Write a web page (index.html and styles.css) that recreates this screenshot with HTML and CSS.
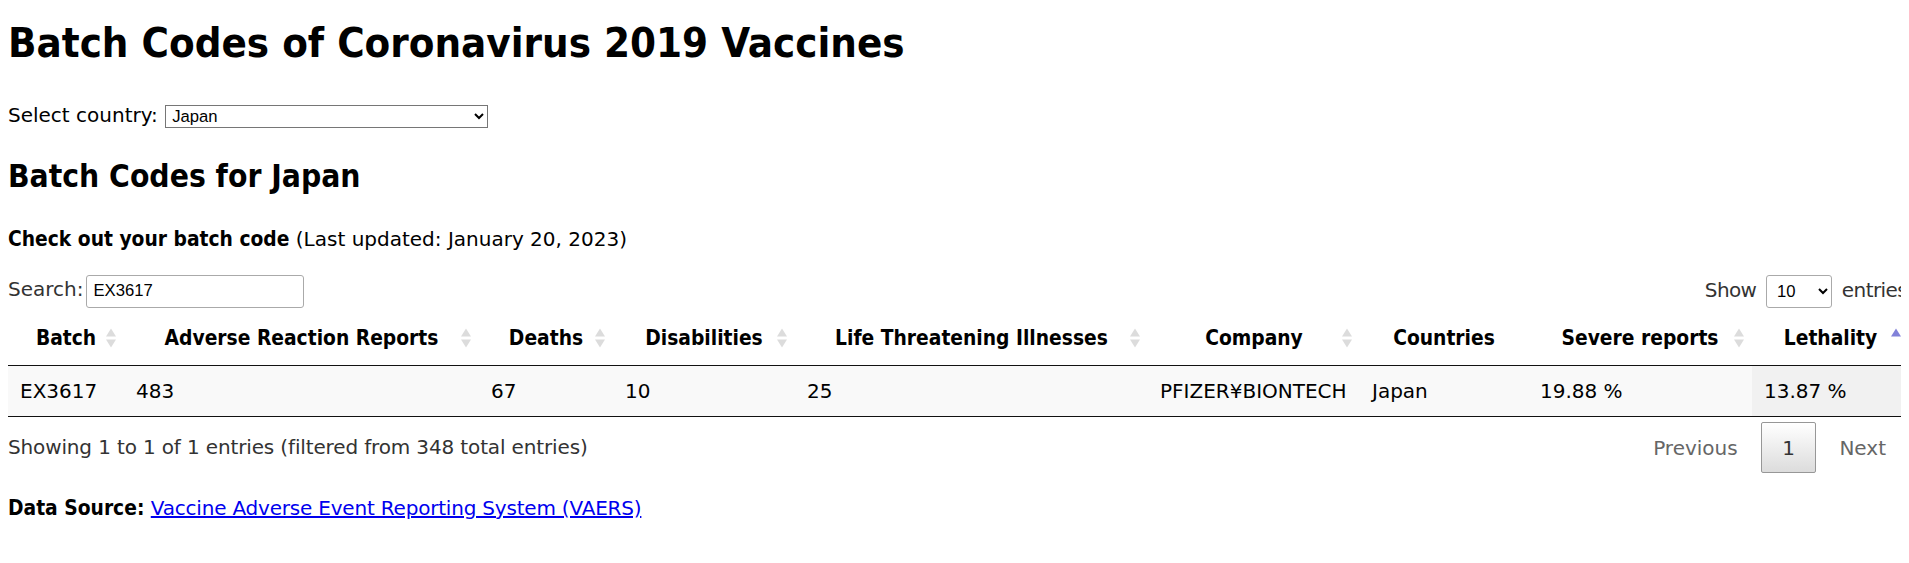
FILE: index.html
```html
<!DOCTYPE html>
<html lang="en">
<head>
<meta charset="utf-8">
<title>Batch Codes of Coronavirus 2019 Vaccines</title>
<link rel="stylesheet" href="styles.css">
</head>
<body>
<h1 class="title">Batch Codes of Coronavirus 2019 Vaccines</h1>
<div class="country-row">
  <label class="country-label">Select country: <select class="country-select"><option>Japan</option></select></label>
</div>
<h2 class="subtitle">Batch Codes for Japan</h2>
<p class="lead"><b class="strong">Check out your batch code</b> (Last updated: January 20, 2023)</p>

<div class="dt-wrapper">
  <div class="dt-top">
    <div class="dt-filter"><label class="dt-label">Search:<input class="dt-search" type="search" value="EX3617"></label></div>
    <div class="dt-length"><label class="dt-label dt-length-label">Show <select class="dt-length-select"><option>10</option><option>25</option><option>50</option><option>100</option></select> entries</label></div>
  </div>

  <table class="dt-table">
    <colgroup>
      <col class="c-batch">
      <col class="c-adverse">
      <col class="c-deaths">
      <col class="c-disab">
      <col class="c-life">
      <col class="c-company">
      <col class="c-countries">
      <col class="c-severe">
      <col class="c-lethal">
    </colgroup>
    <thead>
      <tr>
        <th class="sortable">Batch<svg class="sort-icon" width="10" height="20" viewBox="0 0 10 20"><path d="M0 8.5 L5 0.5 L10 8.5Z" fill="#dcdcdc"/><path d="M0 11.5 L5 19.5 L10 11.5Z" fill="#dcdcdc"/></svg></th>
        <th class="sortable">Adverse Reaction Reports<svg class="sort-icon" width="10" height="20" viewBox="0 0 10 20"><path d="M0 8.5 L5 0.5 L10 8.5Z" fill="#dcdcdc"/><path d="M0 11.5 L5 19.5 L10 11.5Z" fill="#dcdcdc"/></svg></th>
        <th class="sortable">Deaths<svg class="sort-icon" width="10" height="20" viewBox="0 0 10 20"><path d="M0 8.5 L5 0.5 L10 8.5Z" fill="#dcdcdc"/><path d="M0 11.5 L5 19.5 L10 11.5Z" fill="#dcdcdc"/></svg></th>
        <th class="sortable">Disabilities<svg class="sort-icon" width="10" height="20" viewBox="0 0 10 20"><path d="M0 8.5 L5 0.5 L10 8.5Z" fill="#dcdcdc"/><path d="M0 11.5 L5 19.5 L10 11.5Z" fill="#dcdcdc"/></svg></th>
        <th class="sortable">Life Threatening Illnesses<svg class="sort-icon" width="10" height="20" viewBox="0 0 10 20"><path d="M0 8.5 L5 0.5 L10 8.5Z" fill="#dcdcdc"/><path d="M0 11.5 L5 19.5 L10 11.5Z" fill="#dcdcdc"/></svg></th>
        <th class="sortable">Company<svg class="sort-icon" width="10" height="20" viewBox="0 0 10 20"><path d="M0 8.5 L5 0.5 L10 8.5Z" fill="#dcdcdc"/><path d="M0 11.5 L5 19.5 L10 11.5Z" fill="#dcdcdc"/></svg></th>
        <th>Countries</th>
        <th class="sortable">Severe reports<svg class="sort-icon" width="10" height="20" viewBox="0 0 10 20"><path d="M0 8.5 L5 0.5 L10 8.5Z" fill="#dcdcdc"/><path d="M0 11.5 L5 19.5 L10 11.5Z" fill="#dcdcdc"/></svg></th>
        <th class="sortable">Lethality<svg class="sort-icon" width="10" height="20" viewBox="0 0 10 20"><path d="M0 8.5 L5 0.5 L10 8.5Z" fill="#8282d9"/></svg></th>
      </tr>
    </thead>
    <tbody>
      <tr class="row-odd">
        <td>EX3617</td>
        <td>483</td>
        <td>67</td>
        <td>10</td>
        <td>25</td>
        <td>PFIZER¥BIONTECH</td>
        <td>Japan</td>
        <td>19.88 %</td>
        <td class="sorted">13.87 %</td>
      </tr>
    </tbody>
  </table>

  <div class="dt-bottom">
    <div class="dt-info">Showing 1 to 1 of 1 entries (filtered from 348 total entries)</div>
    <div class="dt-paginate"><a class="pg-btn pg-disabled">Previous</a><span class="pg-pages"><a class="pg-btn pg-current">1</a></span><a class="pg-btn pg-disabled">Next</a></div>
  </div>
</div>

<p class="source"><b class="strong">Data Source:</b> <a class="source-link" href="#">Vaccine Adverse Event Reporting System (VAERS)</a></p>
</body>
</html>
```
FILE: styles.css
```css
html {
  overflow: hidden;
}

body {
  margin: 0 8px 8px;
  font-family: "DejaVu Sans", "Noto Sans", sans-serif;
  font-size: 20px;
  line-height: 1.5;
  color: #000;
}

.title,
.subtitle,
.strong,
.dt-table th {
  font-family: "DejaVu Sans Condensed", "DejaVu Sans", sans-serif;
  font-stretch: condensed;
  font-weight: bold;
}

.strong {
  font-size: 20.8px;
}

.title {
  font-size: 41.6px;
  line-height: 60px;
  margin: 13px 0 27px;
}

.country-row {
  height: 30px;
  line-height: 30px;
}

.country-select {
  width: 323px;
  height: 23px;
  font-family: "Liberation Sans", Arial, sans-serif;
  font-size: 16.67px;
  border: 1px solid #767676;
  border-radius: 0;
  background: #fff;
  color: #000;
  padding: 0 0 0 2px;
  margin: 0 0 0 1px;
}

.subtitle {
  font-size: 31.5px;
  line-height: 45px;
  margin: 24px 0 25px;
}

.lead {
  margin: 0 0 20px;
  line-height: 30px;
}

.dt-wrapper {
  width: 1901px;
  color: #333;
}

.dt-top {
  display: flex;
  justify-content: space-between;
  align-items: center;
  height: 34px;
  margin-top: 1px;
}

.dt-label {
  line-height: 30px;
}

.dt-length {
  padding-right: 2px;
}

.dt-length-label {
  letter-spacing: -0.6px;
}

.dt-search {
  box-sizing: border-box;
  width: 218px;
  height: 33px;
  margin-left: 3px;
  padding: 5px 6px;
  border: 1px solid #aaa;
  border-radius: 3px;
  background: transparent;
  font-family: "Liberation Sans", Arial, sans-serif;
  font-size: 16.67px;
  color: #000;
  vertical-align: baseline;
}

.dt-length-select {
  box-sizing: border-box;
  width: 66px;
  height: 33px;
  padding: 4px 4px 4px 6px;
  border: 1px solid #aaa;
  border-radius: 3px;
  background: #fff;
  font-family: "Liberation Sans", Arial, sans-serif;
  font-size: 16.67px;
  letter-spacing: 0;
  color: #000;
  margin: 0 4px;
}

.dt-table {
  width: 1901px;
  table-layout: fixed;
  border-collapse: separate;
  border-spacing: 0;
  border-bottom: 1px solid #111;
  margin-top: 2px;
  color: #000;
}

.c-batch { width: 116px; }
.c-adverse { width: 355px; }
.c-deaths { width: 134px; }
.c-disab { width: 182px; }
.c-life { width: 353px; }
.c-company { width: 212px; }
.c-countries { width: 168px; }
.c-severe { width: 224px; }
.c-lethal { width: 157px; }

.dt-table th {
  position: relative;
  padding: 12.5px 22px;
  line-height: 30px;
  font-size: 20.8px;
  text-align: center;
  white-space: nowrap;
  border-bottom: 1px solid #111;
}

.sort-icon {
  position: absolute;
  right: 8px;
  top: 50%;
  margin-top: -10px;
}

.dt-table td {
  padding: 10px 12px;
  line-height: 30px;
  white-space: nowrap;
  text-align: left;
}

.row-odd td {
  background: #f9f9f9;
}

.row-odd td.sorted {
  background: #f1f1f1;
}

.dt-bottom {
  display: flex;
  justify-content: space-between;
  align-items: flex-start;
}

.dt-info {
  padding-top: 15px;
  line-height: 30px;
  color: #333;
  letter-spacing: -0.14px;
}

.dt-paginate {
  padding-top: 5px;
  padding-right: 2px;
  display: flex;
}

.pg-pages {
  display: flex;
}

.pg-btn {
  display: block;
  box-sizing: border-box;
  min-width: 30px;
  padding: 10px 20px 9px;
  margin-left: 2.5px;
  line-height: 30px;
  text-align: center;
  border: 1px solid transparent;
  border-radius: 2px;
  color: #333;
  text-decoration: none;
}

.pg-disabled {
  color: #666;
}

.pg-current {
  color: #333;
  border: 1px solid #979797;
  background: linear-gradient(to bottom, #fff 0%, #dcdcdc 100%);
}

.source {
  margin: 20px 0;
  line-height: 30px;
}

.source-link {
  color: #0000ee;
  text-decoration: underline;
  letter-spacing: -0.2px;
}
```
